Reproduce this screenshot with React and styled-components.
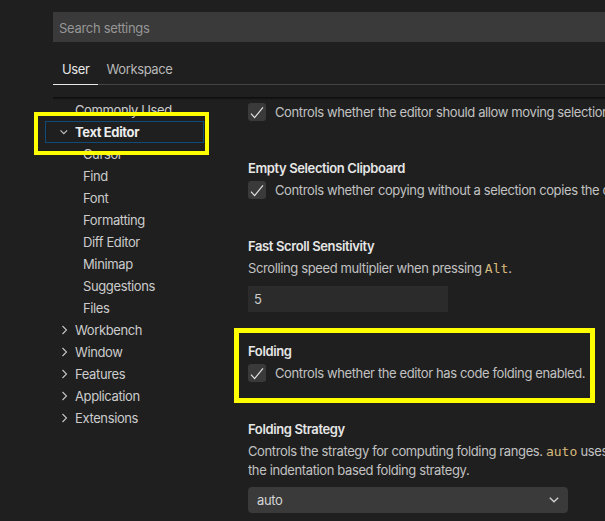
import React from 'react';
import styled, { createGlobalStyle } from 'styled-components';

const GlobalStyle = createGlobalStyle`
  body {
    margin: 0;
    background: #1f1f1f;
    font-family: Inter, "Noto Sans", sans-serif;
    font-size: 13px;
    letter-spacing: -0.38px;
    color: #cccccc;
  }
`;

const Page = styled.div`
  position: relative;
  width: 605px;
  height: 521px;
  overflow: hidden;
  background: #1f1f1f;
`;

const Header = styled.div`
  padding-left: 53px;
`;

const SearchBox = styled.input`
  display: block;
  box-sizing: border-box;
  width: 100%;
  height: 30px;
  margin: 12px 0 0;
  padding: 1px 6px 0;
  border: none;
  outline: none;
  background: #3a3a3a;
  color: #cccccc;
  font-family: inherit;
  font-size: 13px;
  letter-spacing: -0.3px;
  &::placeholder {
    color: #969696;
  }
`;

const TabBar = styled.div`
  display: flex;
  height: 29px;
  margin-top: 13px;
  border-bottom: 1px solid #454545;
`;

const Tab = styled.div`
  display: flex;
  align-items: center;
  padding: 0 8px 2px 9px;
  margin-bottom: -1px;
  color: ${p => (p.$active ? '#e7e7e7' : '#b8b8b8')};
  border-bottom: 1px solid ${p => (p.$active ? '#e7e7e7' : 'transparent')};
`;

const Body = styled.div`
  position: relative;
  display: flex;
  margin-top: 12px;
  height: 424px;
`;

const Shadow = styled.div`
  position: absolute;
  top: 0;
  left: 53px;
  right: 0;
  height: 3px;
  background: linear-gradient(#0b0b0b, rgba(0, 0, 0, 0));
`;

const Tree = styled.div`
  flex: none;
  width: 248px;
  padding-top: 2px;
`;

const TreeRow = styled.div`
  box-sizing: border-box;
  display: flex;
  align-items: center;
  width: 159px;
  height: 22px;
  margin-left: 45px;
  padding-left: ${p => 14 + p.$level * 8}px;
  border: 1px solid ${p => (p.$selected ? '#0f4a78' : 'transparent')};
  color: ${p => (p.$selected ? '#ececec' : '#cccccc')};
  font-weight: ${p => (p.$selected ? 700 : 400)};
  white-space: nowrap;
`;

const Twistie = styled.span`
  display: flex;
  align-items: center;
  flex: none;
  width: 15px;
  height: 10px;
`;

const Content = styled.div`
  flex: 1;
  min-width: 0;
  overflow: hidden;
  white-space: nowrap;
  padding-top: 6px;
`;

const Item = styled.div`
  padding-bottom: 30px;
`;

const Title = styled.div`
  line-height: 18px;
  margin-bottom: 4px;
  font-weight: 600;
  color: #e6e6e6;
`;

const Desc = styled.div`
  line-height: 18px;
  color: #c2c2c2;
`;

const CheckRow = styled.div`
  display: flex;
  align-items: center;
  gap: 9px;
  height: 18px;
  margin-bottom: 8px;
  color: #c2c2c2;
`;

const CheckBox = styled.span`
  flex: none;
  width: 18px;
  height: 18px;
  border-radius: 3px;
  background: #3a3a3a;
  display: flex;
`;

const Code = styled.span`
  font-family: "DejaVu Sans Mono", "Liberation Mono", monospace;
  font-size: 13px;
  letter-spacing: 0;
  color: #d7ba7d;
`;

const TextInput = styled.div`
  box-sizing: border-box;
  width: 200px;
  height: 26px;
  margin-top: 8px;
  padding-left: 6px;
  display: flex;
  align-items: center;
  background: #2b2b2b;
  color: #cccccc;
`;

const Select = styled.div`
  box-sizing: border-box;
  width: 320px;
  height: 26px;
  margin-top: 8px;
  padding: 0 9px;
  display: flex;
  align-items: center;
  justify-content: space-between;
  border-radius: 4px;
  background: #3a3a3a;
  color: #d4d4d4;
`;

const Highlight = styled.div`
  position: absolute;
  box-sizing: border-box;
  left: ${p => p.$x}px;
  top: ${p => p.$y}px;
  width: ${p => p.$w}px;
  height: ${p => p.$h}px;
  border: ${p => p.$b}px solid #ffff00;
  pointer-events: none;
`;

function Chevron({ open }) {
  return (
    <svg width="10" height="10" viewBox="0 0 10 10" fill="none" stroke="#c5c5c5" strokeWidth="1.1">
      {open ? <path d="M0.5 3.3 L3.8 6.6 L7.1 3.3" /> : <path d="M2.5 1 L6.5 5 L2.5 9" />}
    </svg>
  );
}

function Check() {
  return (
    <CheckBox>
      <svg width="18" height="18" viewBox="0 0 18 18" fill="none" stroke="#e2e2e2" strokeWidth="1.2">
        <path d="M3 10.6 L6.6 14.6 L15 4.4" />
      </svg>
    </CheckBox>
  );
}

const tree = [
  { label: 'Commonly Used', level: 0 },
  { label: 'Text Editor', level: 0, chevron: 'open', selected: true },
  { label: 'Cursor', level: 1 },
  { label: 'Find', level: 1 },
  { label: 'Font', level: 1 },
  { label: 'Formatting', level: 1 },
  { label: 'Diff Editor', level: 1 },
  { label: 'Minimap', level: 1 },
  { label: 'Suggestions', level: 1 },
  { label: 'Files', level: 1 },
  { label: 'Workbench', level: 0, chevron: 'closed' },
  { label: 'Window', level: 0, chevron: 'closed' },
  { label: 'Features', level: 0, chevron: 'closed' },
  { label: 'Application', level: 0, chevron: 'closed' },
  { label: 'Extensions', level: 0, chevron: 'closed' },
];

export default function App() {
  return (
    <Page>
      <GlobalStyle />
      <Header>
        <SearchBox placeholder="Search settings" />
        <TabBar>
          <Tab $active>User</Tab>
          <Tab>Workspace</Tab>
        </TabBar>
      </Header>
      <Body>
        <Tree>
          {tree.map(t => (
            <TreeRow key={t.label} $level={t.level} $selected={t.selected}>
              <Twistie>{t.chevron && <Chevron open={t.chevron === 'open'} />}</Twistie>
              {t.label}
            </TreeRow>
          ))}
        </Tree>
        <Content>
          <Item>
            <CheckRow>
              <Check />
              Controls whether the editor should allow moving selections via drag and drop.
            </CheckRow>
          </Item>
          <Item>
            <Title>Empty Selection Clipboard</Title>
            <CheckRow>
              <Check />
              Controls whether copying without a selection copies the current line.
            </CheckRow>
          </Item>
          <Item>
            <Title>Fast Scroll Sensitivity</Title>
            <Desc>
              Scrolling speed multiplier when pressing <Code>Alt</Code>.
            </Desc>
            <TextInput>5</TextInput>
          </Item>
          <Item>
            <Title>Folding</Title>
            <CheckRow>
              <Check />
              Controls whether the editor has code folding enabled.
            </CheckRow>
          </Item>
          <Item>
            <Title>Folding Strategy</Title>
            <Desc>
              Controls the strategy for computing folding ranges. <Code>auto</Code> uses a language specific
              folding strategy if available, else the indentation based one. <Code>indentation</Code> uses
            </Desc>
            <Desc>the indentation based folding strategy.</Desc>
            <Select>
              auto
              <svg width="10" height="6" viewBox="0 0 10 6" fill="none" stroke="#d0d0d0" strokeWidth="1.4">
                <path d="M0.8 0.8 L5 4.8 L9.2 0.8" />
              </svg>
            </Select>
          </Item>
        </Content>
        <Shadow />
      </Body>
      <Highlight $x={34} $y={112} $w={175} $h={43} $b={4} />
      <Highlight $x={234} $y={328} $w={361} $h={75} $b={5} />
    </Page>
  );
}
